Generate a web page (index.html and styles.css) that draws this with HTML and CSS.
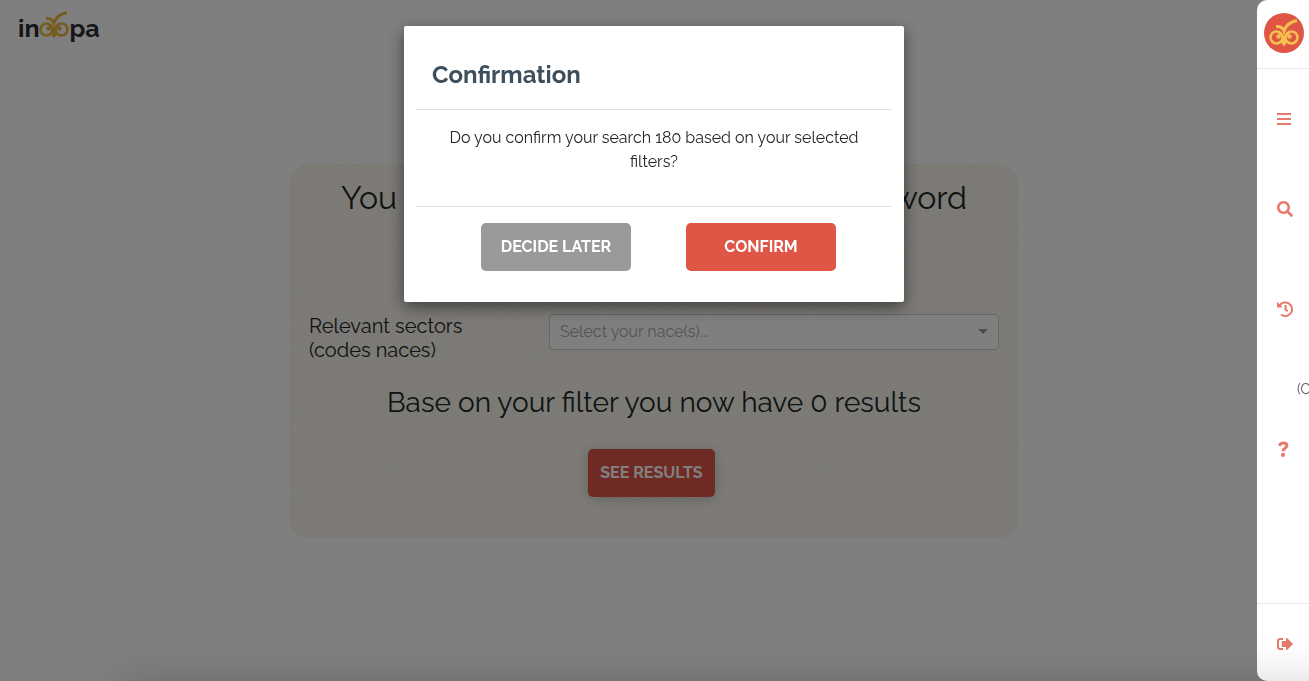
FILE: index.html
```html
<!DOCTYPE html>
<html lang="en">
<head>
<meta charset="utf-8">
<meta name="viewport" content="width=device-width, initial-scale=1">
<title>Inoopa</title>
<link rel="stylesheet" href="styles.css">
</head>
<body>
<svg class="defs" aria-hidden="true">
  <symbol id="owl" viewBox="0 0 60 56">
    <g fill="none" stroke="currentColor">
      <circle cx="15" cy="37" r="12" stroke-width="5"/>
      <circle cx="45" cy="37" r="12" stroke-width="5"/>
      <path d="M14 15c9-1 14 3 16 9C34 12 44 5 56 3" stroke-width="6"/>
      <path d="M19 27l11 10 11-10" stroke-width="4"/>
    </g>
    <circle cx="19" cy="35" r="4.500" fill="currentColor"/>
    <circle cx="41" cy="35" r="4.500" fill="currentColor"/>
    <path d="M25 36h10v12l-5 7-5-7z" fill="currentColor"/>
  </symbol>
</svg>

<header class="topbar">
  <a class="brand" href="#" aria-label="inoopa"><span>in</span><svg class="brand-owl"><use href="#owl"/></svg><span>pa</span></a>
</header>

<main class="page">
  <section class="card">
    <svg class="grain" aria-hidden="true">
      <filter id="noise"><feTurbulence type="fractalNoise" baseFrequency="0.6" numOctaves="2"/></filter>
      <rect width="100%" height="100%" filter="url(#noise)"/>
    </svg>
    <h1 class="card-title">You can search companies with a keyword</h1>
    <div class="field">
      <label class="field-label" for="nace">Relevant sectors (codes naces)</label>
      <div class="select-wrap">
        <select class="select" id="nace"><option>Select your nace(s)...</option></select>
      </div>
    </div>
    <p class="summary">Base on your filter you now have 0 results</p>
    <button class="btn btn-results" type="button">SEE RESULTS</button>
  </section>
</main>

<div class="backdrop">
  <div class="dialog" role="dialog" aria-modal="true" aria-labelledby="dialog-title">
    <h2 class="dialog-title" id="dialog-title">Confirmation</h2>
    <p class="dialog-text">Do you confirm your search 180 based on your selected filters?</p>
    <div class="dialog-actions">
      <button class="btn btn-later" type="button">DECIDE LATER</button>
      <button class="btn btn-confirm" type="button">CONFIRM</button>
    </div>
  </div>
</div>

<aside class="sidebar">
  <div class="side-head"><a class="avatar" href="#" aria-label="Home"><svg class="avatar-owl"><use href="#owl"/></svg></a></div>
  <nav class="side-nav">
    <a class="side-link" href="#" aria-label="Menu"><svg viewBox="0 0 16 16"><path fill="currentColor" d="M0 2h14v2H0zM0 7h14v2H0zM0 12h14v2H0z"/></svg></a>
    <a class="side-link side-search" href="#" aria-label="Search"><svg viewBox="0 0 512 512"><path fill="currentColor" d="M505 442.700L405.300 343c-4.500-4.500-10.600-7-17-7H372c27.600-35.300 44-79.700 44-128C416 93.100 322.900 0 208 0S0 93.100 0 208s93.100 208 208 208c48.300 0 92.700-16.400 128-44v16.300c0 6.400 2.500 12.500 7 17l99.700 99.700c9.400 9.400 24.600 9.400 33.900 0l28.300-28.300c9.400-9.400 9.400-24.600.1-34zM208 336c-70.700 0-128-57.200-128-128 0-70.700 57.200-128 128-128 70.700 0 128 57.200 128 128 0 70.700-57.200 128-128 128z"/></svg></a>
    <a class="side-link side-history" href="#" aria-label="History"><svg viewBox="0 0 16 16"><g fill="none" stroke="currentColor" stroke-width="2"><path d="M2.500 4.600A6.800 6.800 0 1 1 4 13.500"/><path d="M8.500 4v4.500l2.300 1.800"/></g><path fill="currentColor" d="M0 .8V6.500h5.700z"/></svg></a>
    <span class="side-note">(C</span>
    <a class="side-link side-help" href="#" aria-label="Help"><svg viewBox="0 0 16 16"><path d="M2.300 4.800C3.300 2.700 4.600 2 6.300 2c2.200 0 3.600 1.200 3.600 2.700C9.900 7 6 7 6 10.300" fill="none" stroke="currentColor" stroke-width="3"/><circle cx="6" cy="13.900" r="2.100" fill="currentColor"/></svg></a>
  </nav>
  <div class="side-foot"><a class="side-link" href="#" aria-label="Log out"><svg viewBox="0 0 16 16"><path d="M6 3H3a2 2 0 0 0-2 2v6a2 2 0 0 0 2 2h3" fill="none" stroke="currentColor" stroke-width="2"/><path d="M9 2.500c0-.6.600-.8 1-.4l5.600 5.300c.3.300.3.900 0 1.200L10 13.900c-.4.400-1 .2-1-.4V11H5.500c-.5 0-.8-.3-.8-.8V5.800c0-.5.3-.8.800-.8H9z" fill="currentColor"/></svg></a></div>
</aside>
<div class="bottom-shade" aria-hidden="true"></div>
</body>
</html>
```
FILE: styles.css
```css
* { box-sizing: border-box; }

body {
  margin: 0;
  min-height: 100vh;
  overflow: hidden;
  background: #fff;
  color: #212529;
  font-family: Raleway, Lato, "Open Sans", sans-serif;
  font-size: 16px;
  line-height: 24px;
}

h1, h2, p { margin: 0; font-weight: 400; }

.defs { position: absolute; width: 0; height: 0; }

.topbar { height: 164px; padding: 11px 18px; }

.brand {
  display: inline-flex;
  align-items: flex-end;
  color: #2b2d35;
  font-size: 25px;
  font-weight: 700;
  line-height: 34px;
  text-decoration: none;
}
.brand-owl { width: 30px; height: 28px; margin-bottom: 6px; color: #edb93c; }

.page { display: flex; justify-content: center; padding-right: 1px; }

.card {
  position: relative;
  display: flex;
  flex-direction: column;
  align-items: center;
  width: 730px;
  max-width: 100%;
  padding: 14px 20px 41px;
  border-radius: 20px;
  overflow: hidden;
  background: #fdf9f0;
}
.card > * { position: relative; }
.card > .grain {
  position: absolute;
  inset: 0;
  width: 100%;
  height: 100%;
  opacity: 0.12;
}
.card-title { font-size: 32px; line-height: 40px; white-space: nowrap; }

.field {
  display: grid;
  grid-template-columns: 220px 1fr;
  gap: 20px;
  width: 100%;
  margin-top: 96px;
}
.field-label { padding-right: 40px; font-size: 20px; }

.select-wrap { position: relative; height: 36px; }
.select-wrap::after {
  content: "";
  position: absolute;
  top: 15px;
  right: 11px;
  border: 5px solid transparent;
  border-top-color: #999;
  border-bottom: 0;
}
.select {
  appearance: none;
  width: 100%;
  height: 100%;
  padding: 0 10px;
  border: 1px solid #ccc;
  border-radius: 4px;
  background: #fff;
  color: #aaa;
  font: inherit;
}

.summary { margin-top: 23px; font-size: 28px; line-height: 36px; }

.btn {
  height: 48px;
  border: 0;
  border-radius: 5px;
  background: #df5646;
  color: #fff;
  font: inherit;
  font-weight: 700;
}
.btn-results {
  width: 127px;
  margin-top: 28px;
  margin-right: 5px;
  padding: 0;
  box-shadow: 0 2px 12px rgba(0, 0, 0, 0.2);
}
.btn-later, .btn-confirm { width: 150px; }
.btn-later { background: #9c999a; }

.backdrop {
  position: fixed;
  inset: 0;
  display: flex;
  justify-content: center;
  align-items: flex-start;
  padding: 26px 1px 0 0;
  background: rgba(0, 0, 0, 0.5);
}
.dialog {
  width: 500px;
  padding: 24px 12px 31px;
  border-radius: 2px;
  background: #fff;
  box-shadow: 0 5px 16px rgba(0, 0, 0, 0.5);
}
.dialog-title {
  padding: 7px 16px 16px;
  border-bottom: 1px solid #dee2e6;
  color: #3d4f5c;
  font-size: 24px;
  font-weight: 700;
  line-height: 36px;
}
.dialog-text {
  padding: 16px 28px 32px;
  border-bottom: 1px solid #dee2e6;
  text-align: center;
}
.dialog-actions {
  display: flex;
  justify-content: center;
  gap: 55px;
  padding: 16px 0 0 9px;
}

.sidebar {
  position: fixed;
  inset: 0 0 0 auto;
  display: flex;
  flex-direction: column;
  width: 52px;
  overflow: hidden;
  border-radius: 10px 0 0 10px;
  background: #fff;
}
.side-head { height: 69px; padding: 13px 0 0 7px; border-bottom: 1px solid #e9e9e9; }
.avatar {
  display: grid;
  place-items: center;
  width: 40px;
  height: 40px;
  border-radius: 50%;
  background: #df5646;
  color: #f5c04f;
}
.avatar-owl { width: 30px; height: 28px; }
.side-nav { display: flex; flex-direction: column; flex: 1; padding-top: 40px; }
.side-link { display: block; height: 20px; padding: 2px 0 0 20px; color: #e67a6c; }
.side-link svg { display: block; width: 16px; height: 16px; }
.side-search { margin-top: 70px; }
.side-history { margin-top: 80px; }
.side-note { margin-top: 58px; padding-left: 40px; font-size: 14px; color: #555; }
.side-help { margin-top: 38px; }
.side-foot { height: 78px; padding-top: 30px; border-top: 1px solid #e9e9e9; }

.bottom-shade {
  position: fixed;
  inset: 100% -100px auto 124px;
  height: 40px;
  box-shadow: 0 8px 48px 4px rgba(0, 0, 0, 0.2);
  pointer-events: none;
}
```
